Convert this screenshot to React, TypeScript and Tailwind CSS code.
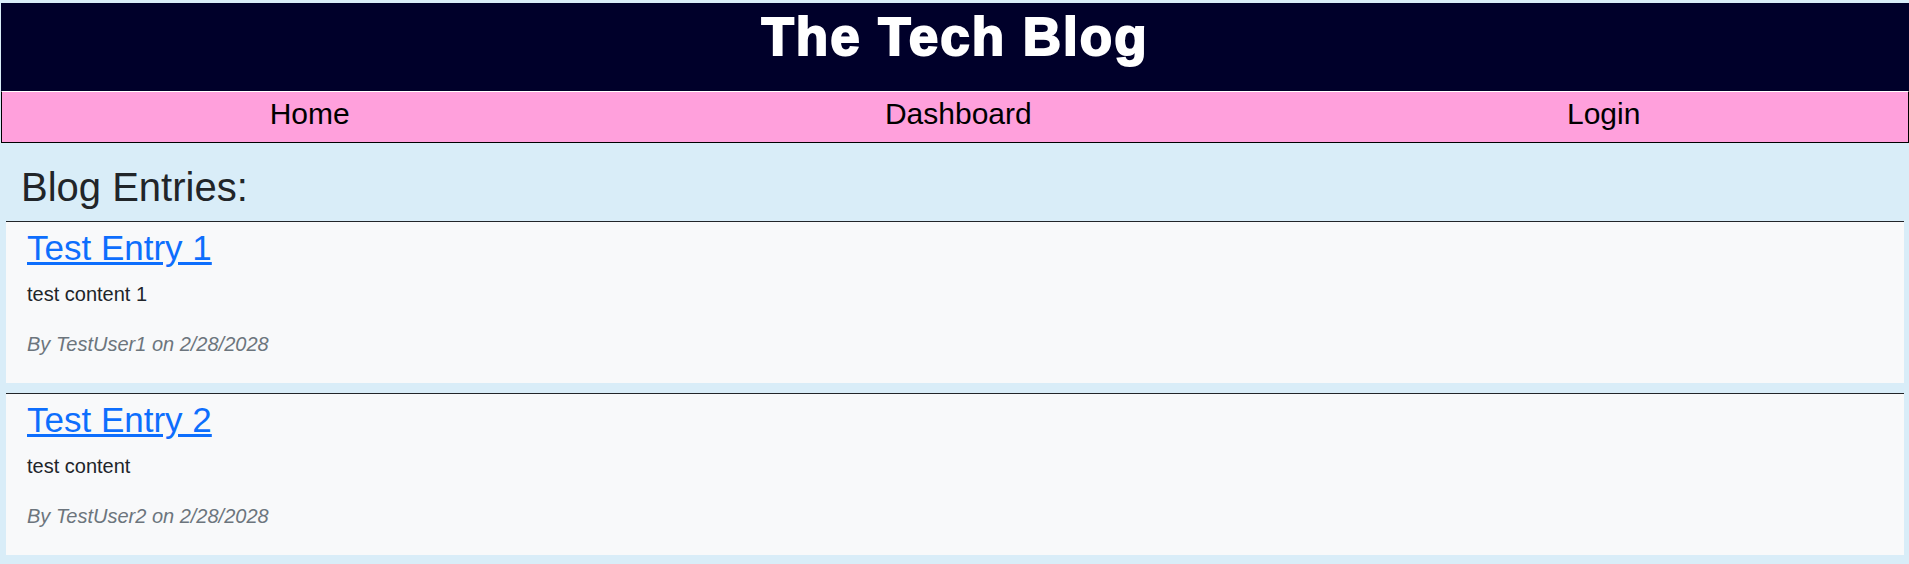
import React from "react";

const entries = [
  { title: "Test Entry 1", content: "test content 1", author: "TestUser1", date: "2/28/2028" },
  { title: "Test Entry 2", content: "test content", author: "TestUser2", date: "2/28/2028" },
];

export default function App() {
  return (
    <div className="min-h-screen bg-[#d9edf8] font-['Liberation_Sans',Arial,sans-serif] text-[#212529]">
      <div className="pt-[3px]">
        <header className="ml-px h-[88px] bg-[#00002a] text-center">
          <h1 className="pt-[8px] text-[53px] leading-[52px] font-bold tracking-[2px] text-white [-webkit-text-stroke:2px_white]">
            The Tech Blog
          </h1>
        </header>
        <nav className="ml-px flex h-[52px] justify-around border-x border-b border-t border-x-black border-b-black border-t-white bg-[#ffa0dc] pt-[7px] text-[30px] leading-[30px] text-black">
          <a href="#">Home</a>
          <a href="#">Dashboard</a>
          <a href="#">Login</a>
        </nav>
      </div>
      <main className="pl-[6px] pr-[5px] pt-5">
        <h2 className="mb-[10px] pl-[15px] text-[40px] leading-[48px]">Blog Entries:</h2>
        <div className="flex flex-col gap-[10px]">
          {entries.map((e) => (
            <article key={e.title} className="border-t border-[#212529] bg-[#f8f9fa] pb-[4px] pl-[21px] pt-[5px]">
              <h3 className="mb-[10px] text-[35px] leading-[42px]">
                <a href="#" className="text-[#0d6efd] underline">
                  {e.title}
                </a>
              </h3>
              <p className="mb-[20px] text-[20px] leading-[30px]">{e.content}</p>
              <p className="mb-[20px] text-[20px] italic leading-[30px] text-[#6c757d]">
                By {e.author} on {e.date}
              </p>
            </article>
          ))}
        </div>
      </main>
    </div>
  );
}
